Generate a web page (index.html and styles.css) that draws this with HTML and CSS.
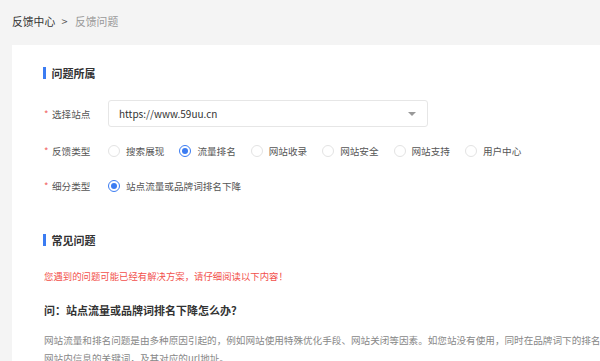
FILE: index.html
```
<!DOCTYPE html>
<html lang="zh-CN">
<head>
    <meta charset="UTF-8">
    <title>反馈问题</title>
    <link rel="stylesheet" href="styles.css">
</head>
<body>
    <div class="page">
        <!-- 面包屑 -->
        <div class="crumb">
            <span class="crumb-home">反馈中心</span>
            <span class="crumb-sep">&gt;</span>
            <span class="crumb-cur">反馈问题</span>
        </div>

        <div class="card">
            <h2 class="sec-title">问题所属</h2>

            <div class="form-row row-site">
                <label class="form-label"><i>*</i>选择站点</label>
                <div class="select">
                    <span>https://www.59uu.cn</span>
                    <b class="caret"></b>
                </div>
            </div>

            <div class="form-row row-type">
                <label class="form-label"><i>*</i>反馈类型</label>
                <div class="radios">
                    <span class="radio"><em></em>搜索展现</span>
                    <span class="radio on"><em></em>流量排名</span>
                    <span class="radio"><em></em>网站收录</span>
                    <span class="radio"><em></em>网站安全</span>
                    <span class="radio"><em></em>网站支持</span>
                    <span class="radio"><em></em>用户中心</span>
                </div>
            </div>

            <div class="form-row row-sub">
                <label class="form-label"><i>*</i>细分类型</label>
                <div class="radios">
                    <span class="radio on"><em></em>站点流量或品牌词排名下降</span>
                </div>
            </div>

            <h2 class="sec-title faq-title">常见问题</h2>

            <p class="tip">您遇到的问题可能已经有解决方案，请仔细阅读以下内容！</p>

            <h3 class="q">问：站点流量或品牌词排名下降怎么办？</h3>
            <p class="answer">网站流量和排名问题是由多种原因引起的，例如网站使用特殊优化手段、网站关闭等因素。如您站没有使用，同时在品牌词下的排名异常下降，请提供<br>网站内信息的关键词，及其对应的url地址。</p>
        </div>
    </div>
</body>
</html>
```

FILE: styles.css
```
body {
    margin: 0;
    background: #f4f4f4;
    font-family: "Noto Sans CJK SC", "Noto Sans", sans-serif;
    overflow: hidden;
}

.page {
    width: 820px;
}

.crumb {
    padding: 14px 12px 0;
    height: 14px;
    line-height: 14px;
    font-size: 10.8px;
    color: #333;
}

.crumb-sep {
    margin: 0 5px 0 4px;
    color: #555;
}

.crumb-cur {
    color: #999;
}

.card {
    margin: 17px 0 0 12px;
    padding: 21px 0 30px 32px;
    background: #fff;
}

.sec-title {
    margin: 0;
    display: flex;
    align-items: center;
    height: 14px;
    line-height: 14px;
    font-size: 11px;
    font-weight: bold;
    color: #333;
}

.sec-title::before {
    content: "";
    width: 2.5px;
    height: 12px;
    margin: 0 6px 0 -1px;
    background: #3b7cf2;
}

.form-row {
    display: flex;
    align-items: center;
    font-size: 9.6px;
    color: #555;
}

.form-label {
    width: 64px;
    flex-shrink: 0;
}

.form-label i {
    display: inline-block;
    width: 8px;
    font-style: normal;
    color: #f26a6a;
}

.row-site {
    margin-top: 20px;
}

.row-type {
    margin-top: 14px;
    height: 20px;
}

.row-sub {
    margin-top: 15px;
    height: 20px;
}

.select {
    width: 320px;
    height: 27px;
    box-sizing: border-box;
    border: 1px solid #e6e6e6;
    border-radius: 3px;
    padding: 0 10px;
    display: flex;
    align-items: center;
    justify-content: space-between;
    font-size: 10px;
    color: #333;
}

.caret {
    width: 0;
    height: 0;
    margin-right: 1px;
    border-left: 4px solid transparent;
    border-right: 4px solid transparent;
    border-top: 4px solid #999;
}

.radios {
    display: flex;
}

.radio {
    display: flex;
    align-items: center;
    margin-right: 15px;
}

.radio em {
    width: 12px;
    height: 12px;
    box-sizing: border-box;
    border: 1px solid #e3e3e3;
    border-radius: 50%;
    margin-right: 6px;
    display: flex;
    align-items: center;
    justify-content: center;
}

.radio.on em {
    border-color: #3b7cf2;
}

.radio.on em::after {
    content: "";
    width: 6px;
    height: 6px;
    border-radius: 50%;
    background: #3b7cf2;
}

.faq-title {
    margin-top: 37px;
}

.tip {
    margin: 22px 0 0;
    line-height: 14px;
    font-size: 9.4px;
    color: #f2504b;
}

.q {
    margin: 19px 0 0;
    line-height: 16px;
    font-size: 11px;
    font-weight: bold;
    color: #333;
}

.answer {
    margin: 13px 0 0;
    line-height: 18px;
    font-size: 9.6px;
    color: #888;
    white-space: nowrap;
}
```
